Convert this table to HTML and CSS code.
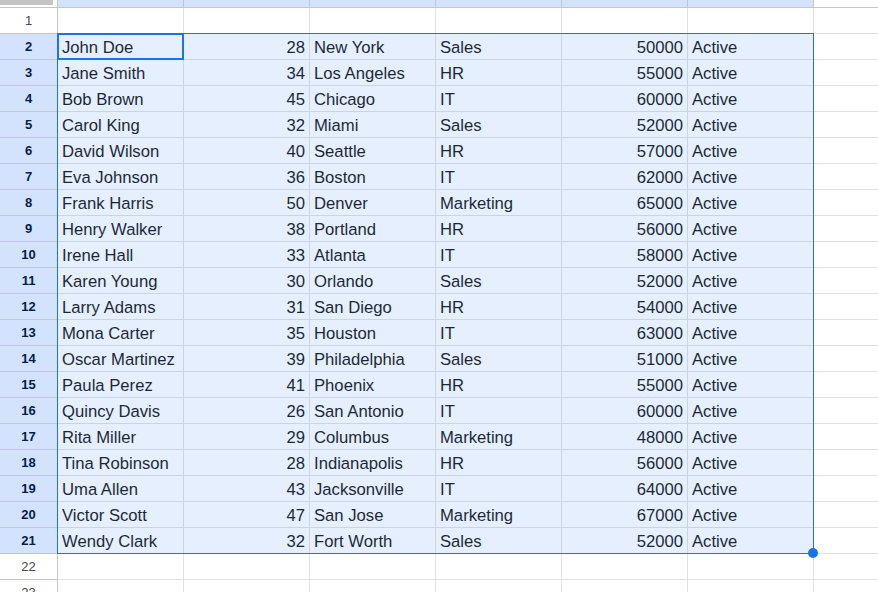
FILE: index.html
```html
<!DOCTYPE html>
<html>
<head>
<meta charset="utf-8">
<link rel="stylesheet" href="styles.css">
</head>
<body>
<div class="sheet">
  <div class="grid">
    <div class="corner"><div class="corner-fill"></div></div>
    <div class="ch sel"></div><div class="ch sel"></div><div class="ch sel"></div><div class="ch sel"></div><div class="ch sel"></div><div class="ch sel"></div><div class="ch"></div>

    <div class="rh">1</div><div class="c"></div><div class="c"></div><div class="c"></div><div class="c"></div><div class="c"></div><div class="c"></div><div class="c"></div>

    <div class="rh sel">2</div><div class="c">John Doe</div><div class="c num">28</div><div class="c">New York</div><div class="c">Sales</div><div class="c num">50000</div><div class="c">Active</div><div class="c"></div>
    <div class="rh sel">3</div><div class="c">Jane Smith</div><div class="c num">34</div><div class="c">Los Angeles</div><div class="c">HR</div><div class="c num">55000</div><div class="c">Active</div><div class="c"></div>
    <div class="rh sel">4</div><div class="c">Bob Brown</div><div class="c num">45</div><div class="c">Chicago</div><div class="c">IT</div><div class="c num">60000</div><div class="c">Active</div><div class="c"></div>
    <div class="rh sel">5</div><div class="c">Carol King</div><div class="c num">32</div><div class="c">Miami</div><div class="c">Sales</div><div class="c num">52000</div><div class="c">Active</div><div class="c"></div>
    <div class="rh sel">6</div><div class="c">David Wilson</div><div class="c num">40</div><div class="c">Seattle</div><div class="c">HR</div><div class="c num">57000</div><div class="c">Active</div><div class="c"></div>
    <div class="rh sel">7</div><div class="c">Eva Johnson</div><div class="c num">36</div><div class="c">Boston</div><div class="c">IT</div><div class="c num">62000</div><div class="c">Active</div><div class="c"></div>
    <div class="rh sel">8</div><div class="c">Frank Harris</div><div class="c num">50</div><div class="c">Denver</div><div class="c">Marketing</div><div class="c num">65000</div><div class="c">Active</div><div class="c"></div>
    <div class="rh sel">9</div><div class="c">Henry Walker</div><div class="c num">38</div><div class="c">Portland</div><div class="c">HR</div><div class="c num">56000</div><div class="c">Active</div><div class="c"></div>
    <div class="rh sel">10</div><div class="c">Irene Hall</div><div class="c num">33</div><div class="c">Atlanta</div><div class="c">IT</div><div class="c num">58000</div><div class="c">Active</div><div class="c"></div>
    <div class="rh sel">11</div><div class="c">Karen Young</div><div class="c num">30</div><div class="c">Orlando</div><div class="c">Sales</div><div class="c num">52000</div><div class="c">Active</div><div class="c"></div>
    <div class="rh sel">12</div><div class="c">Larry Adams</div><div class="c num">31</div><div class="c">San Diego</div><div class="c">HR</div><div class="c num">54000</div><div class="c">Active</div><div class="c"></div>
    <div class="rh sel">13</div><div class="c">Mona Carter</div><div class="c num">35</div><div class="c">Houston</div><div class="c">IT</div><div class="c num">63000</div><div class="c">Active</div><div class="c"></div>
    <div class="rh sel">14</div><div class="c">Oscar Martinez</div><div class="c num">39</div><div class="c">Philadelphia</div><div class="c">Sales</div><div class="c num">51000</div><div class="c">Active</div><div class="c"></div>
    <div class="rh sel">15</div><div class="c">Paula Perez</div><div class="c num">41</div><div class="c">Phoenix</div><div class="c">HR</div><div class="c num">55000</div><div class="c">Active</div><div class="c"></div>
    <div class="rh sel">16</div><div class="c">Quincy Davis</div><div class="c num">26</div><div class="c">San Antonio</div><div class="c">IT</div><div class="c num">60000</div><div class="c">Active</div><div class="c"></div>
    <div class="rh sel">17</div><div class="c">Rita Miller</div><div class="c num">29</div><div class="c">Columbus</div><div class="c">Marketing</div><div class="c num">48000</div><div class="c">Active</div><div class="c"></div>
    <div class="rh sel">18</div><div class="c">Tina Robinson</div><div class="c num">28</div><div class="c">Indianapolis</div><div class="c">HR</div><div class="c num">56000</div><div class="c">Active</div><div class="c"></div>
    <div class="rh sel">19</div><div class="c">Uma Allen</div><div class="c num">43</div><div class="c">Jacksonville</div><div class="c">IT</div><div class="c num">64000</div><div class="c">Active</div><div class="c"></div>
    <div class="rh sel">20</div><div class="c">Victor Scott</div><div class="c num">47</div><div class="c">San Jose</div><div class="c">Marketing</div><div class="c num">67000</div><div class="c">Active</div><div class="c"></div>
    <div class="rh sel">21</div><div class="c">Wendy Clark</div><div class="c num">32</div><div class="c">Fort Worth</div><div class="c">Sales</div><div class="c num">52000</div><div class="c">Active</div><div class="c"></div>

    <div class="rh">22</div><div class="c"></div><div class="c"></div><div class="c"></div><div class="c"></div><div class="c"></div><div class="c"></div><div class="c"></div>
    <div class="rh">23</div><div class="c"></div><div class="c"></div><div class="c"></div><div class="c"></div><div class="c"></div><div class="c"></div><div class="c"></div>

    <div class="selection"></div>
    <div class="active-cell"></div>
    <div class="handle"></div>
  </div>
</div>
</body>
</html>
```

FILE: styles.css
```css
html, body {
  margin: 0;
  padding: 0;
  background: #ffffff;
  overflow: hidden;
}

.sheet {
  width: 878px;
  height: 592px;
  overflow: hidden;
}

.grid {
  position: relative;
  display: grid;
  grid-template-columns: 58px repeat(6, 126px) 100px;
  grid-template-rows: 8px repeat(23, 26px);
  font-family: "Liberation Sans", Arial, sans-serif;
}

.corner {
  box-sizing: border-box;
  border-right: 1px solid #c4c7c5;
  border-bottom: 1px solid #c4c7c5;
  background: #ffffff;
}

.corner-fill {
  width: 53px;
  height: 5px;
  background: #c4c4c4;
}

.ch {
  box-sizing: border-box;
  border-right: 1px solid #c4c7c5;
  border-bottom: 1px solid #c4c7c5;
  background: #ffffff;
}

.ch.sel {
  background: #d3e3fd;
}

.rh {
  box-sizing: border-box;
  border-right: 1px solid #c4c7c5;
  border-bottom: 1px solid #c4c7c5;
  display: flex;
  align-items: center;
  justify-content: center;
  font-family: "Liberation Sans", Arial, sans-serif;
  font-size: 13px;
  color: #444746;
  background: #ffffff;
  padding-bottom: 1px;
}

.rh.sel {
  background: #d3e3fd;
  color: #041e49;
  font-weight: bold;
}

.c {
  box-sizing: border-box;
  border-right: 1px solid #e1e1e1;
  border-bottom: 1px solid #e1e1e1;
  display: flex;
  align-items: center;
  padding: 3px 4px 0 4px;
  font-size: 16.67px;
  color: #1f1f1f;
  white-space: nowrap;
  overflow: hidden;
}

.c.num {
  justify-content: flex-end;
  padding-right: 4px;
}

.selection {
  position: absolute;
  left: 57px;
  top: 33px;
  width: 757px;
  height: 521px;
  box-sizing: border-box;
  border: 1px solid #1a73e8;
  background: rgba(14, 101, 235, 0.1);
  pointer-events: none;
}

.active-cell {
  position: absolute;
  left: 57px;
  top: 33px;
  width: 127px;
  height: 27px;
  box-sizing: border-box;
  border: 2px solid #1a73e8;
  pointer-events: none;
}

.handle {
  position: absolute;
  left: 808px;
  top: 548px;
  width: 10px;
  height: 10px;
  border-radius: 50%;
  background: #1a73e8;
}
```
